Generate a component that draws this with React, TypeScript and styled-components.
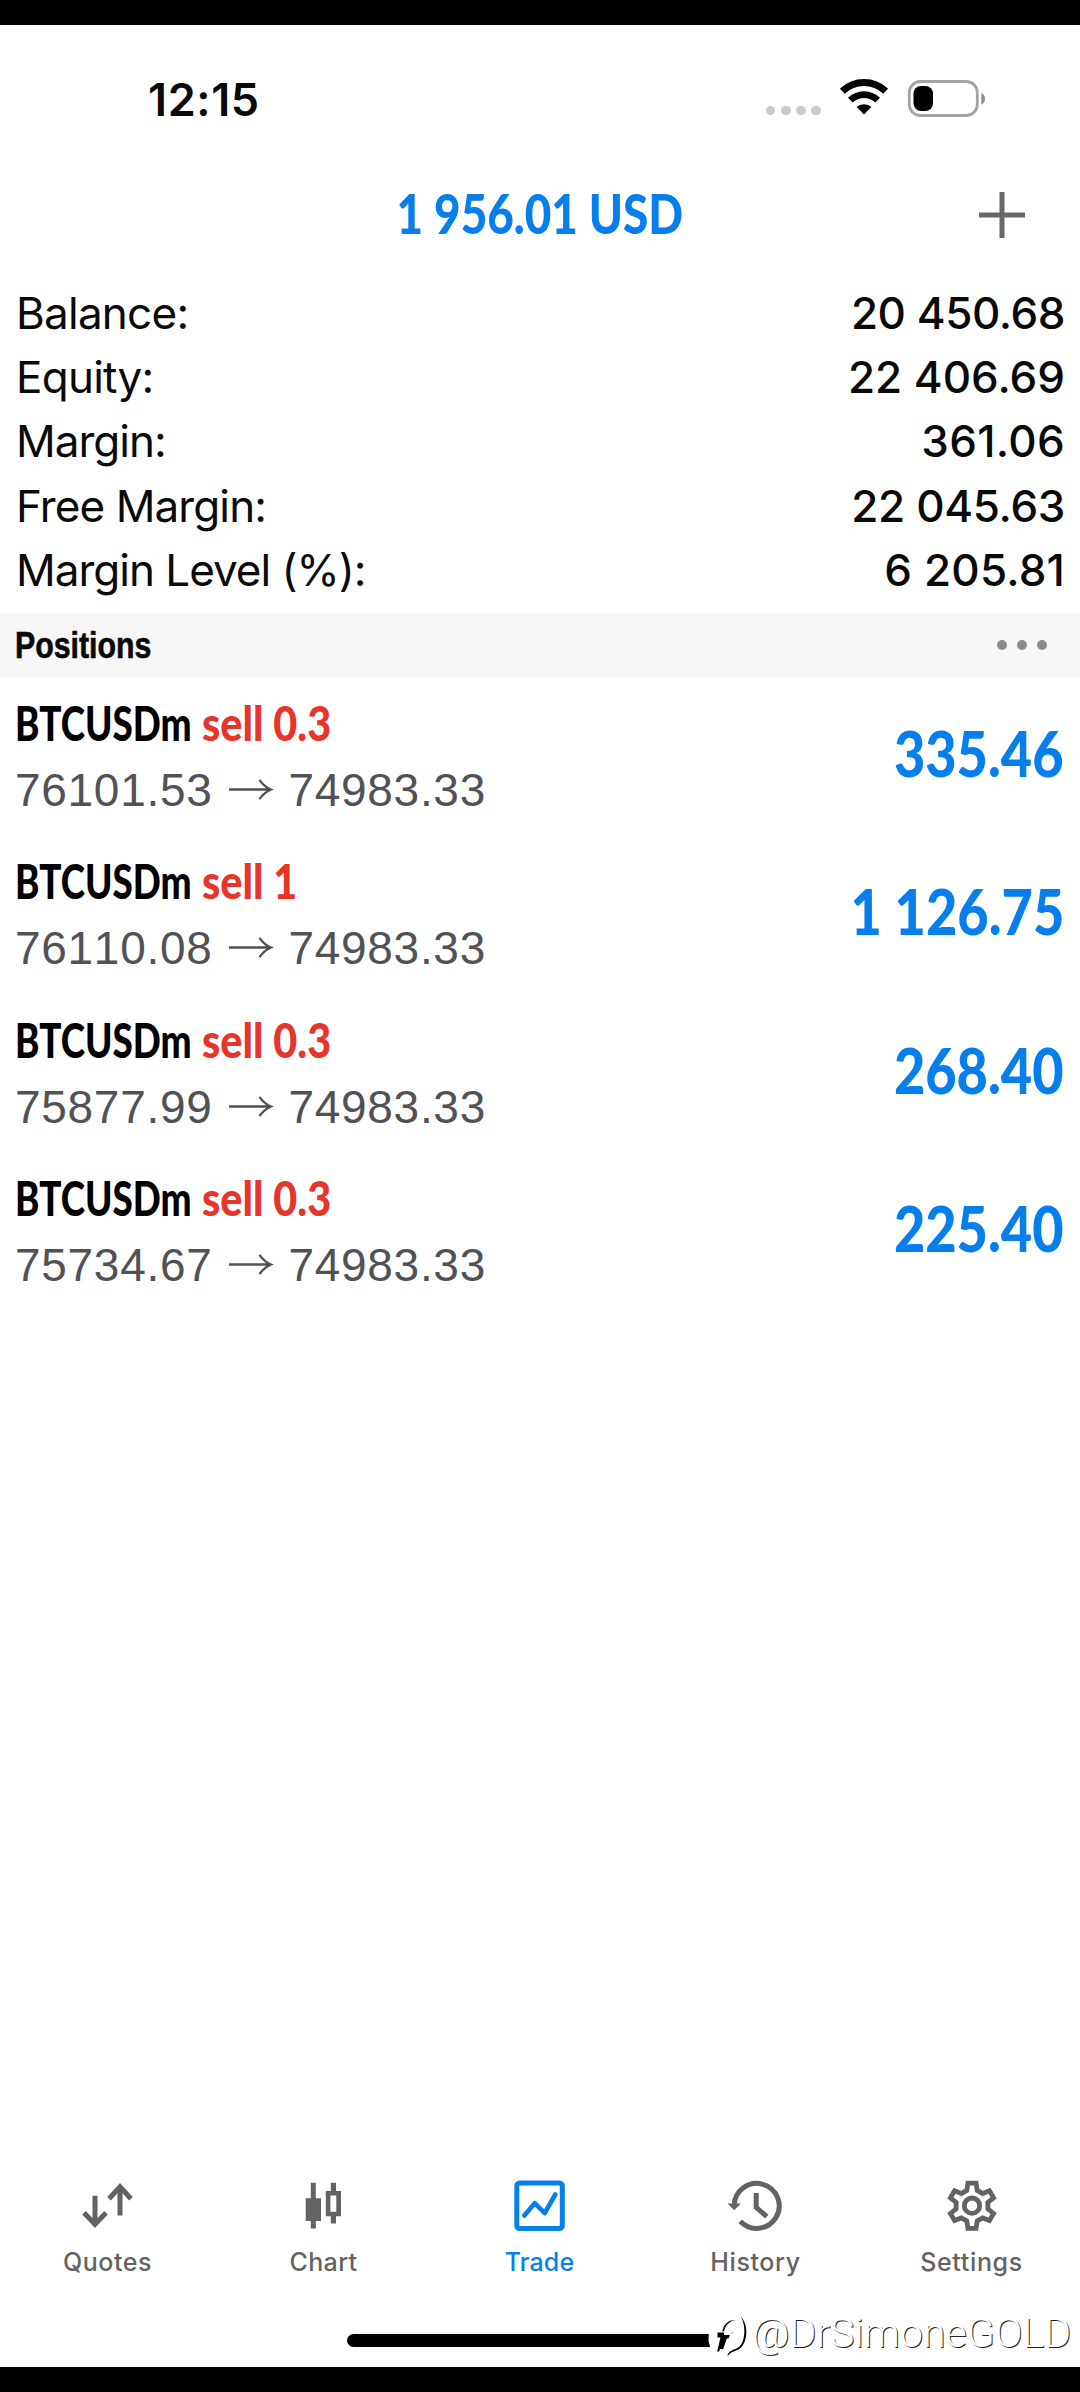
import React from "react";
import styled, { createGlobalStyle } from "styled-components";

const BLUE = "#067fec";
const RED = "#e8352c";
const GRAY = "#636363";

const GlobalStyle = createGlobalStyle`
  * { box-sizing: border-box; }
  body { margin: 0; background: #fff; }
`;

const Screen = styled.div`
  display: flex;
  flex-direction: column;
  width: 1080px;
  height: 2392px;
  overflow: hidden;
  background: #fff;
  color: #0a0a0a;
  font-family: Inter, "Liberation Sans", sans-serif;
`;

const Bezel = styled.div`
  flex: none;
  height: 25px;
  background: #000;
`;

const StatusBar = styled.header`
  display: flex;
  justify-content: space-between;
  height: 155px;
  padding: 48px 94px 0 148px;
`;

const Clock = styled.time`
  font-size: 45px;
  line-height: 54px;
  font-weight: 600;
  letter-spacing: 0.6px;
`;

const StatusIcons = styled.div`
  display: flex;
  align-items: flex-start;
  padding-top: 6px;
`;

const TitleBar = styled.div`
  display: grid;
  grid-template-columns: 1fr auto 1fr;
  align-items: center;
  height: 66px;
  padding-right: 55px;
  padding-left: 55px;
`;

const Total = styled.h1<{ $squeeze: number }>`
  grid-column: 2;
  margin: 0;
  color: ${BLUE};
  font: 900 55px/66px Lato, sans-serif;
  transform: scaleX(${(p) => p.$squeeze});
`;

const AddButton = styled.button`
  justify-self: end;
  display: flex;
  padding: 4px 0 0;
  border: 0;
  background: none;
`;

const Summary = styled.dl`
  margin: 0;
  padding: 35px 15px 0 16px;
  height: 367px;
`;

const SummaryRow = styled.div`
  display: flex;
  justify-content: space-between;
  height: 64.2px;
  font-size: 44px;
  line-height: 64.2px;
`;

const Label = styled.dt<{ $tracking: number }>`
  letter-spacing: ${(p) => p.$tracking}px;
`;

const Amount = styled.dd<{ $tracking?: number }>`
  margin: 0;
  font-weight: 500;
  letter-spacing: ${(p) => p.$tracking ?? 0}px;
`;

const SectionHeader = styled.div`
  display: flex;
  align-items: center;
  justify-content: space-between;
  height: 64px;
  padding: 0 33px 0 15px;
  background: #f7f7f7;
`;

const SectionTitle = styled.h2`
  margin: 0;
  padding-top: 1px;
  font: 700 36px/64px "Liberation Sans", Arial, sans-serif;
  -webkit-text-stroke: 0.6px currentColor;
  transform: scaleX(0.842);
  transform-origin: left;
`;

const Dots = styled.div<{ $size: number; $gap: number; $color: string }>`
  display: flex;
  gap: ${(p) => p.$gap}px;
  & > i {
    width: ${(p) => p.$size}px;
    height: ${(p) => p.$size}px;
    border-radius: 50%;
    background: ${(p) => p.$color};
  }
`;

const SignalDots = styled(Dots)`
  margin: 26.5px 19px 0 0;
`;

const PositionList = styled.ul`
  flex: 1;
  margin: 0;
  padding: 0;
  list-style: none;
`;

const PositionRow = styled.li`
  display: flex;
  justify-content: space-between;
  height: 158.3px;
  padding: 18px 16px 0 15px;
`;

const PositionInfo = styled.div`
  display: flex;
  flex-direction: column;
  gap: 13px;
`;

const Instrument = styled.div`
  display: flex;
  font: 900 47px/56px Lato, sans-serif;
  white-space: nowrap;
`;

const Symbol = styled.span`
  width: 187px;
  color: #000;
  transform: scaleX(0.784);
  transform-origin: left;
`;

const Side = styled.span`
  color: ${RED};
  transform: scaleX(0.88);
  transform-origin: left;
`;

const Prices = styled.div`
  display: flex;
  align-items: center;
  color: #515156;
  font: 400 46px/52px "Liberation Sans", Arial, sans-serif;
  font-kerning: none;
  letter-spacing: 0.7px;
`;

const ArrowIcon = styled.svg`
  margin: -2px 14.5px 0 15.5px;
`;

const Profit = styled.div`
  padding-top: 21px;
  color: ${BLUE};
  font: 900 62px/74px Lato, sans-serif;
  transform: scaleX(0.872);
  transform-origin: right;
`;

const TabBar = styled.nav`
  display: grid;
  grid-template-columns: repeat(5, 1fr);
  height: 99px;
`;

const Tab = styled.a<{ $active?: boolean; $tracking: number }>`
  display: flex;
  flex-direction: column;
  align-items: center;
  gap: 13px;
  padding-right: 1px;
  color: ${(p) => (p.$active ? BLUE : GRAY)};
  font-size: 25px;
  line-height: 30px;
  font-weight: 500;
  letter-spacing: ${(p) => p.$tracking}px;
`;

const Footer = styled.footer`
  position: relative;
  display: flex;
  justify-content: center;
  height: 90px;
  padding-top: 56.5px;
`;

const HomeIndicator = styled.div`
  width: 387px;
  height: 13px;
  border-radius: 7px;
  background: #000;
`;

const Watermark = styled.div`
  position: absolute;
  top: 31px;
  right: 9px;
  display: flex;
  align-items: center;
  color: #fff;
  font: 300 41px/50px Roboto, sans-serif;
  text-shadow: 1px 1px 0.5px #222;
`;

const summary = [
  { label: "Balance:", value: "20 450.68", tracking: -0.75, valueTracking: -0.45 },
  { label: "Equity:", value: "22 406.69", tracking: -0.75 },
  { label: "Margin:", value: "361.06", tracking: -1, valueTracking: 0.3 },
  { label: "Free Margin:", value: "22 045.63", tracking: -0.9, valueTracking: -0.35 },
  { label: "Margin Level (%):", value: "6 205.81", tracking: -1, valueTracking: 0.2 },
];

const positions = [
  { symbol: "BTCUSDm", side: "sell 0.3", open: "76101.53", current: "74983.33", profit: "335.46" },
  { symbol: "BTCUSDm", side: "sell 1", open: "76110.08", current: "74983.33", profit: "1 126.75" },
  { symbol: "BTCUSDm", side: "sell 0.3", open: "75877.99", current: "74983.33", profit: "268.40" },
  { symbol: "BTCUSDm", side: "sell 0.3", open: "75734.67", current: "74983.33", profit: "225.40" },
];

const WifiIcon = () => (
  <svg width="48" height="37" viewBox="0 0 48 37" fill="none" stroke="#000">
    <path d="M2.3 12.2A31.5 31.5 0 0 1 45.7 12.2" strokeWidth="7" />
    <path d="M10.4 21.2A19.4 19.4 0 0 1 37.6 21.2" strokeWidth="6.8" />
    <path d="M16.6 28A11 11 0 0 1 31.4 28L24 35.6Z" fill="#000" stroke="none" />
  </svg>
);

const Battery = styled.svg`
  margin-left: 19px;
`;

const BatteryIcon = () => (
  <Battery width="79" height="38" viewBox="0 0 79 38">
    <rect x="2.3" y="2.5" width="68" height="34" rx="11" fill="none" stroke="#a3a3a3" strokeWidth="2.8" />
    <rect x="6.5" y="7" width="19.5" height="25" rx="7.5" fill="#000" />
    <path d="M74.3 14c5 2 5 9.5 0 11.5z" fill="#8f8f8f" />
  </Battery>
);

const PlusIcon = () => (
  <svg width="46" height="46" viewBox="0 0 46 46" stroke="#686868" strokeWidth="5">
    <path d="M23 0V46M0 23H46" />
  </svg>
);

const LongArrow = () => (
  <ArrowIcon width="46" height="24" viewBox="0 0 46 24" fill="none" stroke="#515156" strokeWidth="2.3">
    <path d="M1 12.5H43M31.5 2.8Q36 9.5 43 12.5Q36 15.5 31.5 22.2" />
  </ArrowIcon>
);

const QuotesIcon = () => (
  <svg width="56" height="56" viewBox="0 0 56 56" fill="none" stroke="currentColor" strokeWidth="5">
    <path d="M15 17.8V47M4 34.8L15 46.4L26 34.8" />
    <path d="M40 37.500V9M29 20.8L40 8.8L51 20.8" />
  </svg>
);

const ChartIcon = () => (
  <svg width="56" height="56" viewBox="0 0 56 56" fill="currentColor">
    <path d="M14.8 4.8h5v45.8h-5zM9.7 20.200h15.3v22.8h-15.3z" />
    <path d="M34.8 4.8h5.2v8.2h5v25.2h-5v7.2h-5.2v-7.2h-5v-25.2h5zM34.4 17.500v16.200h5.9v-16.2z" fillRule="evenodd" />
  </svg>
);

const TradeIcon = () => (
  <svg width="56" height="56" viewBox="0 0 56 56" fill="none" stroke="currentColor" strokeWidth="5">
    <rect x="4.8" y="5" width="45.5" height="45.5" rx="2.8" />
    <path d="M12.3 37.5L22.7 25.2L32.7 35.2L43.3 16.5" strokeWidth="4.6" strokeLinecap="round" strokeLinejoin="round" />
  </svg>
);

const HistoryIcon = () => (
  <svg width="56" height="56" viewBox="0 0 56 56" fill="none" stroke="currentColor" strokeWidth="5">
    <path d="M6.2 27.5A22.5 22.5 0 1 1 12.3 43.3" />
    <path d="M28.2 15V29.3L38.800 38.700" />
    <path d="M-.4 25.5H12.900L6.200 32.300Z" fill="currentColor" stroke="none" />
  </svg>
);

const GearIcon = () => (
  <svg width="56" height="56" viewBox="0 0 56 56" fill="none" stroke="currentColor" strokeWidth="4.8">
    <circle cx="28" cy="27.7" r="7.7" />
    <path d="M23.9 5.1H32.1L33.2 12.4L38.6 15.5L45.5 12.8L49.6 19.9L43.9 24.5V30.9L49.6 35.5L45.5 42.6L38.6 39.9L33.2 43L32.1 50.3H23.9L22.8 43L17.4 39.9L10.5 42.6L6.4 35.5L12.1 30.9V24.5L6.4 19.9L10.5 12.8L17.4 15.5L22.8 12.4Z" />
  </svg>
);

const WatermarkLogo = () => (
  <svg width="45" height="50" viewBox="0 0 45 50">
    <path d="M2 18H45V44H4.5L1.5 33Z" fill="#fff" />
    <path d="M10.500 24.500h6.500v2.500h6l-1.500 3.400h-1.700l-3.600 10.500h-3.200l-.8 2.700h-2l3.300-14h-3z" fill="#000" />
    <path d="M15.2 23.500C16.500 16 22 11.300 28.5 12C22.5 13.1 18.5 17 17 23.500Z" fill="#111" />
    <path d="M34 9C41 15.500 41.500 32.500 33.500 40C29.500 43.5 24 43 20.500 48.500C21 42 27 42.500 32 39C38.500 33.500 39 17.500 34 9Z" fill="#000" />
    <path d="M23.5 25h3" stroke="#aaa" strokeWidth="1" />
  </svg>
);

const tabs = [
  { name: "Quotes", Icon: QuotesIcon, tracking: 0.5 },
  { name: "Chart", Icon: ChartIcon, tracking: 0.35 },
  { name: "Trade", Icon: TradeIcon, tracking: 0.15, active: true },
  { name: "History", Icon: HistoryIcon, tracking: 0.6 },
  { name: "Settings", Icon: GearIcon, tracking: 0.65 },
];

export default function App() {
  return (
    <>
      <GlobalStyle />
      <Screen>
        <Bezel />
        <StatusBar>
          <Clock>12:15</Clock>
          <StatusIcons>
            <SignalDots $size={9.6} $gap={5.6} $color="#cacaca">
              <i /><i /><i /><i />
            </SignalDots>
            <WifiIcon />
            <BatteryIcon />
          </StatusIcons>
        </StatusBar>
        <TitleBar>
          <Total $squeeze={0.834}>1 956.01 USD</Total>
          <AddButton aria-label="New order"><PlusIcon /></AddButton>
        </TitleBar>
        <Summary>
          {summary.map((s) => (
            <SummaryRow key={s.label}>
              <Label $tracking={s.tracking}>{s.label}</Label>
              <Amount $tracking={s.valueTracking}>{s.value}</Amount>
            </SummaryRow>
          ))}
        </Summary>
        <SectionHeader>
          <SectionTitle>Positions</SectionTitle>
          <Dots $size={10} $gap={10} $color="#8c8c8c">
            <i /><i /><i />
          </Dots>
        </SectionHeader>
        <PositionList>
          {positions.map((p) => (
            <PositionRow key={p.open}>
              <PositionInfo>
                <Instrument>
                  <Symbol>{p.symbol}</Symbol>
                  <Side>{p.side}</Side>
                </Instrument>
                <Prices>
                  {p.open}
                  <LongArrow />
                  {p.current}
                </Prices>
              </PositionInfo>
              <Profit>{p.profit}</Profit>
            </PositionRow>
          ))}
        </PositionList>
        <TabBar>
          {tabs.map(({ name, Icon, tracking, active }) => (
            <Tab key={name} $active={active} $tracking={tracking}>
              <Icon />
              {name}
            </Tab>
          ))}
        </TabBar>
        <Footer>
          <HomeIndicator />
          <Watermark>
            <WatermarkLogo />
            @DrSimoneGOLD
          </Watermark>
        </Footer>
        <Bezel />
      </Screen>
    </>
  );
}
